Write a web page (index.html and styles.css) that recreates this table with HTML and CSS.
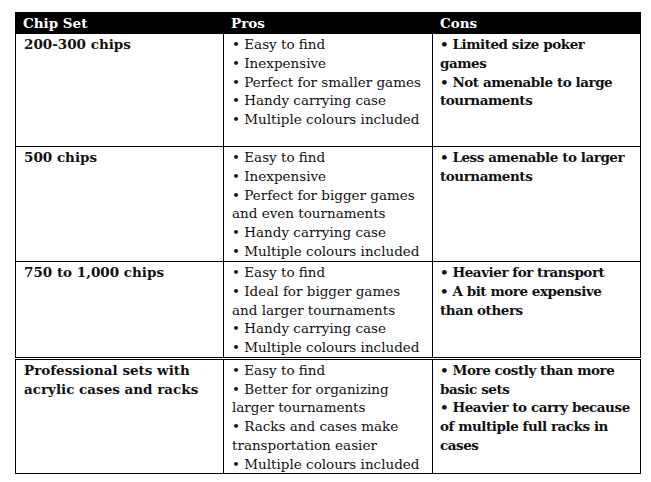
FILE: index.html
```html
<!DOCTYPE html>
<html>
<head>
<meta charset="utf-8">
<link rel="stylesheet" href="styles.css">
</head>
<body>
<table class="chips">
  <colgroup><col class="c1"><col class="c2"><col class="c3"></colgroup>
  <thead>
    <tr><th>Chip Set</th><th>Pros</th><th>Cons</th></tr>
  </thead>
  <tbody>
    <tr class="ra">
      <td class="set">200-300 chips</td>
      <td><div>• Easy to find</div><div>• Inexpensive</div><div>• Perfect for smaller games</div><div>• Handy carrying case</div><div>• Multiple colours included</div></td>
      <td class="cons"><div>• Limited size poker games</div><div>• Not amenable to large tournaments</div></td>
    </tr>
    <tr class="rb">
      <td class="set">500 chips</td>
      <td><div>• Easy to find</div><div>• Inexpensive</div><div>• Perfect for bigger games and even tournaments</div><div>• Handy carrying case</div><div>• Multiple colours included</div></td>
      <td class="cons"><div>• Less amenable to larger tournaments</div></td>
    </tr>
    <tr class="rc">
      <td class="set">750 to 1,000 chips</td>
      <td><div>• Easy to find</div><div>• Ideal for bigger games and larger tournaments</div><div>• Handy carrying case</div><div>• Multiple colours included</div></td>
      <td class="cons"><div>• Heavier for transport</div><div>• A bit more expensive than others</div></td>
    </tr>
    <tr class="rd">
      <td class="set">Professional sets with acrylic cases and racks</td>
      <td><div>• Easy to find</div><div>• Better for organizing larger tournaments</div><div>• Racks and cases make transportation easier</div><div>• Multiple colours included</div></td>
      <td class="cons"><div>• More costly than more basic sets</div><div>• Heavier to carry because of multiple full racks in cases</div></td>
    </tr>
  </tbody>
</table>
</body>
</html>
```
FILE: styles.css
```css
html, body {
  margin: 0;
  padding: 0;
  background: #fff;
}
body {
  padding: 12px 0 0 15px;
  font-family: "DejaVu Serif", "Liberation Serif", serif;
  font-size: 13.5px;
  color: #111;
}
.chips {
  border-collapse: collapse;
  table-layout: fixed;
  width: 625px;
}
.c1 { width: 208px; }
.c2 { width: 209px; }
.c3 { width: 208px; }
.chips th {
  background: #000;
  color: #fff;
  text-align: left;
  font-weight: bold;
  height: 20px;
  line-height: 18px;
  padding: 0 7px;
  border: 1px solid #000;
}
.chips td {
  border: 1px solid #000;
  vertical-align: top;
  padding: 1px 4px 0 8px;
  line-height: 18.75px;
}
.chips .set, .chips .cons {
  font-weight: bold;
}
.chips .cons {
  letter-spacing: -0.45px;
  padding-left: 7px;
  padding-right: 8px;
}
.ra td { height: 111px; }
.rb td { height: 113px; }
.rc td { height: 93px; }
.rd td { height: 111px; border-top: 3px double #000; }
```
